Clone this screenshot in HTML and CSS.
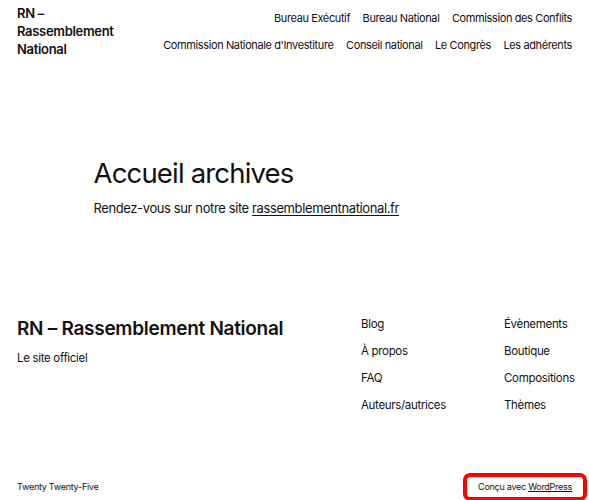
FILE: index.html
```html
<!DOCTYPE html>
<html lang="fr">
<head>
    <meta charset="UTF-8">
    <meta name="viewport" content="width=device-width, initial-scale=1.0">
    <title>RN – Rassemblement National</title>

    <link rel="stylesheet" href="styles.css">
</head>
<body>

    <header class="siteHeader">
        <a class="siteTitle" href="#">RN –<br>Rassemblement<br>National</a>

        <nav class="mainNav">
            <div class="navRow">
                <a href="#">Bureau Exécutif</a>
                <a href="#">Bureau National</a>
                <a href="#">Commission des Conflits</a>
            </div>
            <div class="navRow">
                <a href="#">Commission Nationale d'Investiture</a>
                <a href="#">Conseil national</a>
                <a href="#">Le Congrès</a>
                <a href="#">Les adhérents</a>
            </div>
        </nav>
    </header>

    <main class="content">
        <h1>Accueil archives</h1>
        <p>Rendez-vous sur notre site <a href="#">rassemblementnational.fr</a></p>
    </main>

    <footer class="siteFooter">
        <div class="footTop">
            <div class="footBrand">
                <h2>RN – Rassemblement National</h2>
                <p>Le site officiel</p>
            </div>

            <div class="footLinks">
                <ul>
                    <li><a href="#">Blog</a></li>
                    <li><a href="#">À propos</a></li>
                    <li><a href="#">FAQ</a></li>
                    <li><a href="#">Auteurs/autrices</a></li>
                </ul>
                <ul>
                    <li><a href="#">Évènements</a></li>
                    <li><a href="#">Boutique</a></li>
                    <li><a href="#">Compositions</a></li>
                    <li><a href="#">Thèmes</a></li>
                </ul>
            </div>
        </div>

        <div class="footBottom">
            <span>Twenty Twenty-Five</span>
            <span class="credit">Conçu avec <a href="#">WordPress</a></span>
        </div>
    </footer>

</body>
</html>
```

FILE: styles.css
```css
*{
    margin: 0;
    padding: 0;
    box-sizing: border-box;
}

body{
    font-family: Inter, "Noto Sans", sans-serif;
    color: #111;
    background: #fff;
    letter-spacing: -0.02em;
}

a{
    color: inherit;
    text-decoration: none;
}

.siteHeader{
    display: flex;
    justify-content: space-between;
    padding: 4px 17px 0 17px;
}

.siteTitle{
    font-size: 13px;
    font-weight: 600;
    line-height: 18px;
}

.mainNav{
    display: flex;
    flex-direction: column;
    align-items: flex-end;
    gap: 9px;
    padding-top: 5px;
    font-size: 11px;
    line-height: 18px;
    letter-spacing: -0.035em;
}

.navRow{
    display: flex;
    gap: 12.5px;
}

.content{
    width: 402px;
    margin: 98px auto 0 auto;
}

.content h1{
    font-size: 27.5px;
    font-weight: 400;
    line-height: 34px;
    letter-spacing: -0.03em;
}

.content p{
    margin-top: 8px;
    font-size: 13px;
    line-height: 20px;
    letter-spacing: -0.03em;
}

.content p a{
    text-decoration: underline;
    text-decoration-thickness: 1px;
    text-underline-offset: 2px;
}

.siteFooter{
    padding: 0 17px;
    margin-top: 95px;
}

.footTop{
    display: flex;
    justify-content: space-between;
    padding-top: 3px;
}

.footBrand h2{
    font-size: 19px;
    font-weight: 600;
    line-height: 26px;
    letter-spacing: -0.015em;
}

.footBrand p{
    margin-top: 8px;
    font-size: 11.5px;
    line-height: 16px;
}

.footLinks{
    display: flex;
    width: 211px;
}

.footLinks ul{
    list-style: none;
    display: flex;
    flex-direction: column;
    gap: 11px;
    font-size: 11.5px;
    line-height: 16px;
    width: 143px;
}

.footLinks ul + ul{
    width: 68px;
}

.footLinks li{
    white-space: nowrap;
}

.footBottom{
    display: flex;
    justify-content: space-between;
    align-items: center;
    margin-top: 60px;
    font-size: 9px;
    line-height: 12px;
    letter-spacing: -0.03em;
}

.credit{
    margin-right: -15px;
    padding: 4px 11px;
    border: 4px solid #f00;
    border-radius: 7px;
}

.credit a{
    text-decoration: underline;
    text-underline-offset: 1px;
}
```
